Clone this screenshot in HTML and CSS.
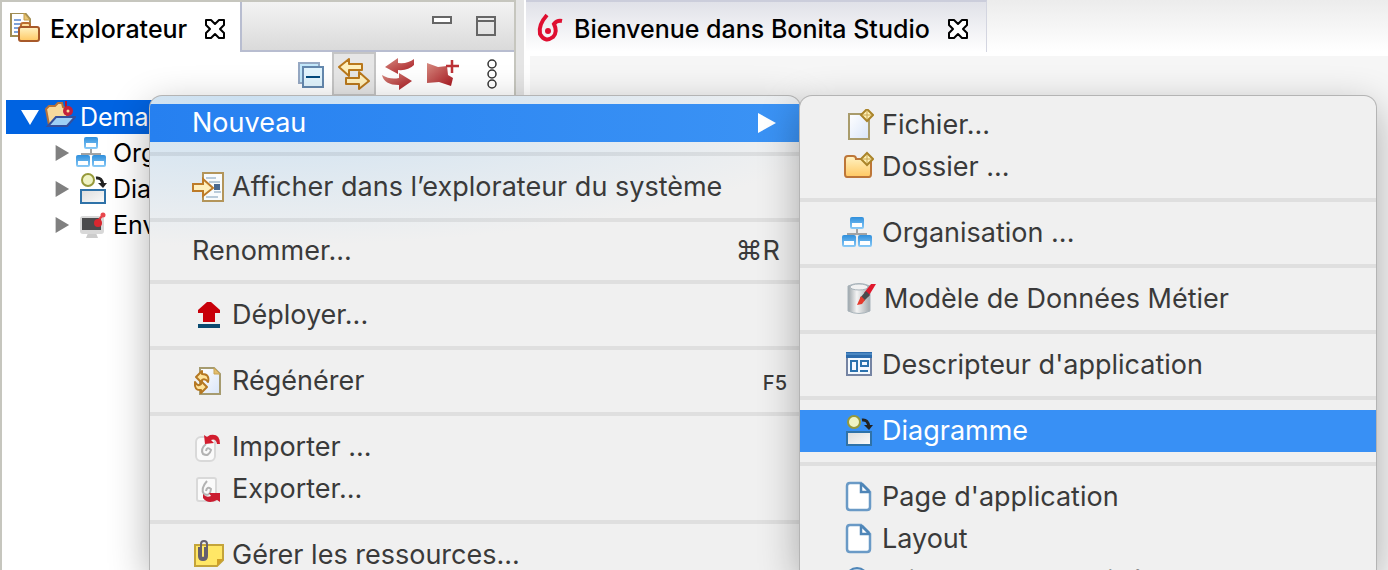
FILE: index.html
```html
<!DOCTYPE html>
<html lang="fr">
<head>
<meta charset="utf-8">
<title>Bonita Studio</title>
<meta name="viewport" content="width=device-width, initial-scale=1">
<link rel="stylesheet" href="styles.css">
</head>
<body>
<svg class="defs" aria-hidden="true">
  <defs>
    <linearGradient id="gold" x1="0" y1="0" x2="0" y2="1"><stop offset="0" stop-color="#fff3c4"/><stop offset="1" stop-color="#ffc862"/></linearGradient>
    <linearGradient id="paper" x1="0" y1="0" x2="1" y2="1"><stop offset="0" stop-color="#fff"/><stop offset="1" stop-color="#d9e5f8"/></linearGradient>
    <linearGradient id="sky" x1="0" y1="0" x2="0" y2="1"><stop offset="0" stop-color="#2f8fdc"/><stop offset="1" stop-color="#8ccbf7"/></linearGradient>
    <linearGradient id="can" x1="0" y1="0" x2="1" y2="0"><stop offset="0" stop-color="#9aa3a8"/><stop offset=".4" stop-color="#f4f4f4"/><stop offset="1" stop-color="#a2a9ad"/></linearGradient>
    <linearGradient id="brick" x1="0" y1="0" x2="1" y2="1"><stop offset="0" stop-color="#d68a80"/><stop offset="1" stop-color="#a81820"/></linearGradient>
    <linearGradient id="tray" x1="0" y1="0" x2="1" y2="1"><stop offset="0" stop-color="#dcdcdc"/><stop offset="1" stop-color="#fbfbfb"/></linearGradient>
  </defs>
  <symbol id="i-org" viewBox="0 0 32 32">
    <path d="M15 12v6M6 21v-4h18v4" fill="none" stroke="#a3a3a3" stroke-width="2"/>
    <g fill="url(#sky)"><rect x="8" y="0" width="14" height="12" rx="2"/><rect x="0" y="18" width="14" height="12" rx="2"/><rect x="16" y="18" width="14" height="12" rx="2"/></g>
    <g fill="#fff"><path d="M10 6h10v4H10zM2 24h10v4H2zM18 24h10v4H18z"/></g>
  </symbol>
  <symbol id="i-diagram" viewBox="0 0 32 32">
    <circle cx="12" cy="7" r="6" fill="#eff3c4" stroke="#96993a" stroke-width="2"/>
    <path d="M20 5q6-1 7 7" fill="none" stroke="#222" stroke-width="3"/><path d="M22 10h9l-4 5z" fill="#222"/>
    <rect x="5" y="17" width="24" height="13" fill="url(#tray)" stroke="#2f72a8" stroke-width="2"/>
  </symbol>
  <symbol id="i-page" viewBox="0 0 32 32">
    <path d="M8 2h11l9 9v15q0 3-3 3H8q-3 0-3-3V5q0-3 3-3z" fill="#fff" stroke="#6a9ac6" stroke-width="2.500"/>
    <path d="M19 2v9h9M20 3l7 7" fill="none" stroke="#4f86b8" stroke-width="2.500"/>
  </symbol>
  <symbol id="i-close" viewBox="0 0 22 22">
    <path d="M2 2h5l4 4 4-4h5v5l-4 4 4 4v5h-5l-4-4-4 4H2v-5l4-4-4-4z" fill="#fff" stroke="#000" stroke-width="2" stroke-linejoin="round"/>
  </symbol>
</svg>

<main class="workbench">
  <section class="explorer">
    <header class="tabs">
      <div class="tab tab-explorer">
        <svg class="icon" viewBox="0 0 32 32"><path d="M2 0h14l5 6v17H2z" fill="#fff" stroke="#a08d54" stroke-width="2"/><path d="M15 0v7h6z" fill="#e9c775" stroke="#c39b4a"/><path d="M5 7h7M5 11h8M5 15h6M5 19h4" stroke="#7fa2d8" stroke-width="2"/><path d="M12 15v-3q0-2 2-2h5q2 0 2 2v3" fill="#fde0a0" stroke="#bb6d31" stroke-width="2"/><rect x="10" y="14" width="20" height="14" rx="2" fill="url(#gold)" stroke="#a7592a" stroke-width="2"/></svg>
        <h1 class="tab-title">Explorateur</h1>
        <button class="close" aria-label="Fermer"><svg viewBox="0 0 22 22"><use href="#i-close"/></svg></button>
      </div>
      <div class="window-buttons">
        <button class="plain" aria-label="Réduire"><svg class="win" viewBox="0 0 22 22"><rect x="2" y="2" width="18" height="6" fill="#fff" stroke="#666" stroke-width="2"/></svg></button>
        <button class="plain" aria-label="Agrandir"><svg class="win" viewBox="0 0 22 22"><path d="M2 2h18v18H2zM2 6h18" fill="none" stroke="#666" stroke-width="2"/></svg></button>
      </div>
    </header>
    <div class="toolbar">
      <button class="tool" aria-label="Tout réduire"><svg class="icon" viewBox="0 0 32 32"><rect x="5" y="5" width="20" height="20" fill="#c3e8fa" stroke="#96a9c4" stroke-width="2"/><rect x="9" y="9" width="20" height="20" fill="#e1f4fd" stroke="#6488ae" stroke-width="2"/><path d="M12 19h14" stroke="#014a7d" stroke-width="2"/></svg></button>
      <button class="tool tool-on" aria-label="Lier à l'éditeur" aria-pressed="true"><svg class="icon" viewBox="0 0 32 32"><g fill="#fff0bd" stroke="#b9781c" stroke-width="2" stroke-linejoin="round"><path d="M1 9l10-8v5h13v6H11v6z"/><path d="M31 23l-10 8v-5H8v-6h13v-6z"/></g></svg></button>
      <button class="tool" aria-label="Synchroniser"><svg class="icon" viewBox="0 0 32 32"><path d="M3 9L16 0v5q10 1 16-4v6q-6 6-16 5v4z" fill="url(#brick)"/><path d="M30 23L17 32v-5Q2 27 0 17q8 5 17 3v-5z" fill="url(#brick)"/></svg></button>
      <button class="tool tool-wide" aria-label="Nouveau projet"><svg class="icon" viewBox="0 0 32 32"><path d="M0 5l11 4 9-1 1 9 5 3-2 8-12-4-12 1z" fill="url(#brick)"/><path d="M25 2v13M19 8h13" stroke="#bd3237" stroke-width="2.500"/></svg></button>
      <button class="tool" aria-label="Plus"><svg class="icon" viewBox="0 0 32 32"><g fill="#fff" stroke="#333" stroke-width="1.500"><circle cx="16" cy="6" r="4"/><circle cx="16" cy="16" r="4"/><circle cx="16" cy="26" r="4"/></g></svg></button>
    </div>
    <ul class="tree">
      <li class="node node-root"><svg class="twist" viewBox="0 0 20 16"><path d="M1 1h18l-9 15z" fill="#fff"/></svg>
        <svg class="icon" viewBox="0 0 32 32"><path d="M2 8l3-3h6l3-3h4l1 4 4 2v16H5z" fill="#f7d99c" stroke="#b4713a" stroke-width="2"/><path d="M22 0v7" stroke="#b31531" stroke-width="2"/><circle cx="24" cy="10" r="5" fill="#c3203a"/><circle cx="24" cy="10" r="1.500" fill="#f7d99c"/><path d="M4 25l8-9h19l-8 9z" fill="#9fd0f5" stroke="#354f9b" stroke-width="2"/></svg><span>Demande</span></li>
      <li class="node"><svg class="twist" viewBox="0 0 20 20"><path d="M4 1l15 9-15 9z" fill="#808080"/></svg><svg class="icon"><use href="#i-org"/></svg><span>Organisation</span></li>
      <li class="node"><svg class="twist" viewBox="0 0 20 20"><path d="M4 1l15 9-15 9z" fill="#808080"/></svg><svg class="icon"><use href="#i-diagram"/></svg><span>Diagrammes</span></li>
      <li class="node"><svg class="twist" viewBox="0 0 20 20"><path d="M4 1l15 9-15 9z" fill="#808080"/></svg><svg class="icon" viewBox="0 0 32 32"><path d="M12 24h8l2 5H10z" fill="#ccc"/><rect x="4" y="7" width="24" height="18" rx="3" fill="#d8d8d8"/><rect x="6" y="9" width="19" height="12" fill="#4a4a4c"/><path d="M21 13l5-6" stroke="#e43b42" stroke-width="2"/><circle cx="27" cy="6" r="2.500" fill="#e8474d"/><circle cx="22" cy="14" r="4" fill="#d8272f"/></svg><span>Environnements</span></li>
    </ul>
  </section>

  <section class="editor">
    <header class="editor-tabs">
      <div class="tab tab-editor">
        <svg class="icon" viewBox="0 0 32 32"><path d="M14 2Q5 12 7 21q5 9 13 3 5-5 1-13 3-4 8-3" fill="none" stroke="#df0f31" stroke-width="4"/><circle cx="15" cy="18" r="3" fill="#df0f31"/></svg>
        <h2 class="tab-title">Bienvenue dans Bonita Studio</h2>
        <button class="close" aria-label="Fermer"><svg viewBox="0 0 22 22"><use href="#i-close"/></svg></button>
      </div>
    </header>
    <div class="editor-body"></div>
  </section>
</main>

<nav class="menu menu-context" aria-label="Menu contextuel">
  <button class="item item-text item-active"><span>Nouveau</span><svg class="arrow" viewBox="0 0 20 20"><path d="M1 0l18 10L1 20z" fill="#fff"/></svg></button>
  <hr>
  <button class="item"><svg class="icon" viewBox="0 0 32 32"><rect x="11" y="2" width="20" height="28" fill="#f8fbfd" stroke="#b3955a" stroke-width="2"/><path d="M14 7h10M17 11h11M22 21h7M14 26h12" stroke="#b9cbda" stroke-width="2"/><path d="M22 13h6v6h-6z" fill="#49688f"/><path d="M1 13h10V8l10 9-10 8v-5H1z" fill="#ffefbd" stroke="#bd7b28" stroke-width="2"/></svg><span>Afficher dans l’explorateur du système</span></button>
  <hr>
  <button class="item item-text"><span>Renommer...</span><kbd>⌘R</kbd></button>
  <hr>
  <button class="item"><svg class="icon" viewBox="0 0 32 32"><path d="M15 3h4l9 8v3h-5v9H11v-9H6v-3z" fill="#c8000a"/><path d="M6 25h22v4H6z" fill="#0a4a70"/></svg><span>Déployer...</span></button>
  <hr>
  <button class="item"><svg class="icon" viewBox="0 0 32 32"><path d="M8 3h14l6 6v20H8z" fill="url(#paper)" stroke="#a69b6f" stroke-width="2"/><path d="M22 3v6h6z" fill="#e3be70" stroke="#c9a452"/><g fill="#ffe39b" stroke="#b57823" stroke-width="2" stroke-linejoin="round"><path d="M4 12l6-6v3q8 0 6 8-3-4-6-2v3z"/><path d="M15 22l-6 6v-3q-7 1-6-8 3 5 6 2v-3z"/></g></svg><span>Régénérer</span><kbd class="key-small">F5</kbd></button>
  <hr>
  <button class="item"><svg class="icon" viewBox="0 0 32 32"><rect x="4" y="6" width="19" height="24" rx="5" fill="#fafafa" stroke="#d9d9d9" stroke-width="2"/><path d="M14 13q-6 5-3 10 6 3 8-4-4-4-5 1" fill="none" stroke="#b3b3b3" stroke-width="2"/><path d="M12 4l1 9 9-1-3-3q5-2 6 4h3Q28 2 18 4l-3 2z" fill="#d21d2e"/></svg><span>Importer ...</span></button>
  <button class="item"><svg class="icon" viewBox="0 0 32 32"><rect x="5" y="5" width="19" height="23" rx="2" fill="#fafafa" stroke="#d9d9d9" stroke-width="2"/><path d="M15 8q-7 8-3 13 6 3 7-5-4-3-5 2" fill="none" stroke="#b3b3b3" stroke-width="2"/><path d="M11 21q3 4 8 2l-2-3h11v9l-3-2q-9 5-14-2z" fill="#cb1c30"/></svg><span>Exporter...</span></button>
  <hr>
  <button class="item"><svg class="icon" viewBox="0 0 32 32"><path d="M3 6h28v15l-6 6H3z" fill="#ffe766" stroke="#c4a43a" stroke-width="2"/><path d="M31 20h-6v7z" fill="#cf9f26"/><path d="M7 8v9q0 4 4 4t4-4V5q0-3-3-3T9 5v12q0 2 2 2t2-2V8" fill="none" stroke="#665f6e" stroke-width="2"/></svg><span>Gérer les ressources...</span></button>
</nav>

<nav class="menu menu-new" aria-label="Nouveau">
  <button class="item"><svg class="icon" viewBox="0 0 32 32"><path d="M7 5h20v25H7z" fill="url(#paper)" stroke="#a99c6c" stroke-width="2"/><path d="M25 0l6 6-6 6-6-6z" fill="#fff1b4" stroke="#aa8429" stroke-width="2"/><path d="M25 2v8M21 6h8" stroke="#c9a655"/></svg><span>Fichier...</span></button>
  <button class="item"><svg class="icon" viewBox="0 0 32 32"><path d="M3 8q0-3 3-3h5q3 0 3 3h13q2 0 2 2v13q0 3-2 3H5q-2 0-2-3z" fill="url(#gold)" stroke="#bd7638" stroke-width="2"/><path d="M25 2l6 6-6 6-6-6z" fill="#fff1b4" stroke="#aa8429" stroke-width="2"/><path d="M25 4v8M21 8h8" stroke="#c9a655"/></svg><span>Dossier ...</span></button>
  <hr>
  <button class="item"><svg class="icon"><use href="#i-org"/></svg><span>Organisation ...</span></button>
  <hr>
  <button class="item"><svg class="icon icon-wide" viewBox="0 0 34 32"><path d="M6 3q11-5 22 0v25q-11 5-22 0z" fill="url(#can)" stroke="#a9b4bb"/><ellipse cx="17" cy="4" rx="9" ry="3" fill="#f2f2f2" stroke="#a9b4bb"/><path d="M34 1h-5l-7 9 4 4z" fill="#e0182c"/><path d="M24 8l4 4-6 6-4-3z" fill="#484c4e"/><path d="M19 13l4 4-3 4-5 1z" fill="#e53a2c"/></svg><span>Modèle de Données Métier</span></button>
  <hr>
  <button class="item"><svg class="icon" viewBox="0 0 32 32"><path d="M5 4h24v22H5z" fill="#f3f9ff" stroke="#7584a3" stroke-width="2"/><path d="M4 3h26v6H4z" fill="#2c6bac"/><path d="M4 5h26" stroke="#69a3d6"/><path d="M9 12h6v10H9zM19 12h7v5h-7zM18 22h8" fill="none" stroke="#2b72ae" stroke-width="2"/></svg><span>Descripteur d'application</span></button>
  <hr>
  <button class="item item-active"><svg class="icon"><use href="#i-diagram"/></svg><span>Diagramme</span></button>
  <hr>
  <button class="item"><svg class="icon"><use href="#i-page"/></svg><span>Page d'application</span></button>
  <button class="item"><svg class="icon"><use href="#i-page"/></svg><span>Layout</span></button>
  <button class="item"><svg class="icon" viewBox="0 0 32 32"><circle cx="15" cy="14" r="11" fill="#b8d2e8" stroke="#4f86b8" stroke-width="2"/></svg><span>Widget personnalisé</span></button>
</nav>
</body>
</html>
```
FILE: styles.css
```css
* { box-sizing: border-box; }

body {
  position: relative;
  height: 100vh;
  margin: 0;
  overflow: hidden;
  background: #e5e5e5;
  color: #000;
  font-family: Inter, "Liberation Sans", sans-serif;
  font-size: 25px;
  line-height: 34px;
}

button {
  margin: 0;
  padding: 0;
  border: 0;
  background: none;
  color: inherit;
  font: inherit;
}

svg { display: block; flex: none; }
.defs { position: absolute; width: 0; height: 0; }
.icon { width: 32px; height: 32px; }
.icon-wide { width: 34px; }

.workbench { display: flex; gap: 8px; height: 100%; }

.explorer {
  flex: 0 0 516px;
  border: 2px solid #c6c6be;
  border-bottom: 0;
  background: #fff;
}

.tabs {
  display: flex;
  height: 50px;
  background: linear-gradient(#f3f3f3, #d9d9d9);
}

.tab { display: flex; align-items: center; gap: 9px; }
.tab-title { margin: 0; font-size: 25px; font-weight: 500; white-space: nowrap; }
.close { margin-left: 8px; }
.close svg { width: 22px; height: 22px; }

.tab-explorer {
  flex: 0 0 240px;
  padding: 4px 0 0 7px;
  border-right: 2px solid #b8bdd0;
  background: #fff;
}

.window-buttons {
  display: flex;
  flex: 1;
  align-items: center;
  justify-content: flex-end;
  gap: 22px;
  padding-right: 17px;
  border-bottom: 2px solid #b8bdd0;
}

.win { width: 22px; height: 22px; }

.toolbar { display: flex; justify-content: flex-end; height: 44px; }

.tool {
  display: flex;
  align-items: center;
  justify-content: center;
  width: 44px;
}

.tool-on { border: 2px solid #c5c5c5; background: #e6e6e6; }
.tool-wide { width: 46px; margin-right: 4px; }

.tree { margin: 0; padding: 4px 0 0 4px; list-style: none; }

.node {
  display: flex;
  align-items: center;
  gap: 5px;
  height: 34px;
  margin-bottom: 2px;
  padding-left: 45px;
  white-space: nowrap;
}

.node-root { gap: 4px; padding-left: 14px; background: #0063e1; color: #fff; }
.twist { width: 20px; height: 18px; }

.editor {
  display: flex;
  flex: 1;
  flex-direction: column;
  padding-left: 2px;
  background: #fff;
}

.editor-tabs { display: flex; flex: 0 0 52px; background: linear-gradient(#ececec, #fff); }

.tab-editor {
  padding: 4px 17px 0 7px;
  border-top: 2px solid #cbcddb;
  border-right: 1px solid #d3d5e0;
  background: linear-gradient(#e0e1e8, #fff);
}

.editor-body { flex: 1; margin: 4px 0 0 4px; background: #f6f6f6; }

.menu {
  position: absolute;
  top: 96px;
  bottom: 0;
  padding-top: 8px;
  overflow: hidden;
  border-radius: 12px 12px 0 0;
  background: #f0f0f0;
  box-shadow: 0 0 0 1px #b4b4b4, 0 12px 40px rgba(0, 0, 0, 0.32);
  color: #3a3a3a;
  font-size: 27px;
}

.menu-context {
  left: 150px;
  width: 650px;
  background: radial-gradient(ellipse 620px 150px at 100px 0, #cbe0f1, #f0f0f0) #f0f0f0;
}

.menu-new { left: 800px; width: 576px; }

.menu hr {
  height: 4px;
  margin: 10px 0;
  border: 0;
  background: rgba(0, 0, 0, 0.07);
}

.item {
  display: flex;
  align-items: center;
  gap: 8px;
  width: 100%;
  height: 42px;
  padding: 0 13px 0 42px;
  text-align: left;
  white-space: nowrap;
}

.item-text { height: 38px; padding-right: 20px; }
.item-active { background: linear-gradient(90deg, #2680f0, #3b93f5); color: #fff; }
.menu-new .item-active { background: #3890f5; }
.arrow { width: 20px; height: 20px; margin-left: auto; margin-right: 3px; }
kbd { margin-left: auto; font: inherit; }
.key-small { padding-top: 4px; font-size: 20px; font-weight: 500; }
```
